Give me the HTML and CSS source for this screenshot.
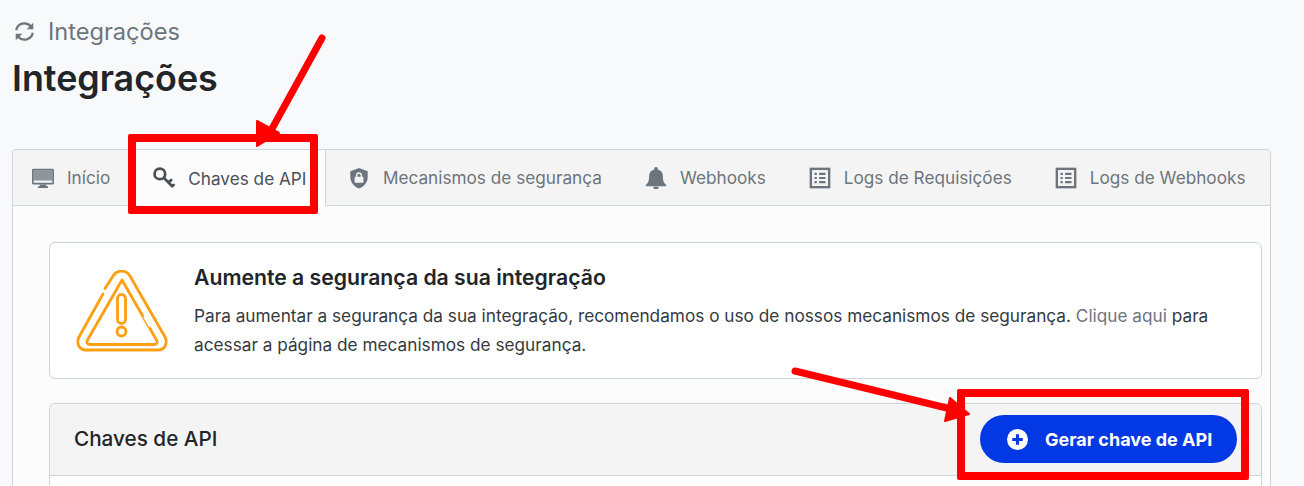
FILE: index.html
```html
<!DOCTYPE html>
<html lang="pt-BR">
<head>
<meta charset="utf-8">
<title>Integrações</title>
<link rel="stylesheet" href="styles.css">
</head>
<body>
<div class="page">
  <nav class="crumb">
    <svg class="crumb-icon" viewBox="0 0 24 24" fill="none" stroke="#6c757d" stroke-width="2.600"><path d="M2.500 10.500A9.500 9.500 0 0 1 19 6l2.200 2.400"/><path d="M22 2v7.500h-7.500z" stroke="none" fill="#6c757d"/><path d="M21.500 13.500A9.500 9.500 0 0 1 5 18l-2.200-2.400"/><path d="M2 22v-7.500h7.500z" stroke="none" fill="#6c757d"/></svg>
    <span>Integrações</span>
  </nav>
  <h1 class="title">Integrações</h1>
  <section class="tabs-card">
    <div class="tabs">
      <a class="tab tab-first">
        <svg class="tab-icon" viewBox="0 0 24 24" fill="#6c757d"><path fill-rule="evenodd" d="M1.500 2h21A1.500 1.500 0 0 1 24 3.500v14a1.500 1.500 0 0 1-1.500 1.500h-21A1.500 1.500 0 0 1 0 17.500v-14A1.500 1.500 0 0 1 1.500 2zM1.800 3.800v13.400h20.400V3.800z"/><path d="M1.800 3.800h20.400v11H1.800z" opacity=".75"/><path d="M8.500 19h7v2h2v1.800h-11V21h2z"/></svg>
        Início</a>
      <a class="tab tab-active">
        <svg class="tab-icon" viewBox="0 0 24 24" fill="none" stroke="#495057" stroke-width="3" stroke-linecap="round"><circle cx="7.500" cy="7.500" r="5.800"/><path d="M12 12l9 9M17 17l2.800-2.800M21 21l1.500-1.500"/></svg>
        Chaves de API</a>
      <a class="tab">
        <svg class="tab-icon" viewBox="0 0 24 24"><path fill="#6c757d" d="M12 1l9.500 3.500V11c0 6-4 10.500-9.500 12.500C6.500 21.500 2.500 17 2.500 11V4.500z"/><path fill="#f4f4f4" d="M8 10.500h8a.8.8 0 0 1 .8.8v5a.8.8 0 0 1-.8.8H8a.8.8 0 0 1-.8-.8v-5a.8.8 0 0 1 .8-.8z"/><path fill="none" stroke="#f4f4f4" stroke-width="1.500" d="M9.500 11V9a2.500 2.500 0 0 1 5 0v2"/></svg>
        Mecanismos de segurança</a>
      <a class="tab">
        <svg class="tab-icon" viewBox="0 0 24 24" fill="#6c757d"><path d="M12 0a2 2 0 0 1 2 2v.8c3.500.8 5.500 3.700 5.500 7.200 0 5 1 7 3.300 9.200.6.600.2 1.800-.8 1.800H2c-1 0-1.400-1.200-.8-1.800C3.500 17 4.500 15 4.500 10c0-3.500 2-6.400 5.500-7.200V2a2 2 0 0 1 2-2z"/><path d="M9 21.500h6a3 3 0 0 1-6 0z"/></svg>
        Webhooks</a>
      <a class="tab">
        <svg class="tab-icon" viewBox="0 0 24 24" fill="none" stroke="#6c757d"><rect x="2" y="2" width="20" height="20" stroke-width="2.600"/><path stroke-width="2.200" d="M6 7.500h2.500M11 7.500h7M6 12h2.500M11 12h7M6 16.500h2.500M11 16.500h7"/></svg>
        Logs de Requisições</a>
      <a class="tab">
        <svg class="tab-icon" viewBox="0 0 24 24" fill="none" stroke="#6c757d"><rect x="2" y="2" width="20" height="20" stroke-width="2.600"/><path stroke-width="2.200" d="M6 7.500h2.500M11 7.500h7M6 12h2.500M11 12h7M6 16.500h2.500M11 16.500h7"/></svg>
        Logs de Webhooks</a>
    </div>
    <div class="tabs-body">
      <div class="notice">
        <svg class="notice-icon" viewBox="0 0 92 82" fill="none" stroke="#ff9f12" stroke-width="2.800" stroke-linecap="round" stroke-linejoin="round"><path d="M29 18.500L37 6c4-6.500 13-6.500 17 0L89 67c3 6 0 13-7 13H10c-7 0-10-7-7-13L27 24"/><path d="M46 10L80.500 70c1.500 3 0 4.500-2 4.500H13.500c-2 0-3.500-1.500-2-4.500L46 10"/><rect x="41.500" y="24.500" width="8" height="29" rx="4"/><circle cx="45.500" cy="61.500" r="4.500"/><path d="M75 56.500L69 46" stroke="#fff" stroke-width="4" stroke-linecap="butt"/></svg>
        <div class="notice-text">
          <h2>Aumente a segurança da sua integração</h2>
          <p>Para aumentar a segurança da sua integração, recomendamos o uso de nossos mecanismos de segurança. <a class="link">Clique aqui</a> para acessar a página de mecanismos de segurança.</p>
        </div>
      </div>
      <div class="keys-card">
        <div class="keys-head">
          <h3>Chaves de API</h3>
          <button class="gen-btn">
            <svg class="gen-icon" viewBox="0 0 20 20"><circle cx="10" cy="10" r="10" fill="#fff"/><path d="M10 5v10M5 10h10" stroke="#0339e4" stroke-width="3"/></svg>
            Gerar chave de API</button>
        </div>
      </div>
    </div>
  </section>
  <div class="mark mark-tab"></div>
  <div class="mark mark-btn"></div>
  <svg class="arrows" viewBox="0 0 1304 486" fill="#f00" stroke="#f00" stroke-linecap="round" stroke-linejoin="round">
    <path d="M322 38L268 136" fill="none" stroke-width="7"/>
    <path d="M257 121L279 133L257 146z" stroke-width="2"/>
    <path d="M795 371L955 410" fill="none" stroke-width="7"/>
    <path d="M950 398L969 414L945 421z" stroke-width="2"/>
  </svg>
</div>
</body>
</html>
```
FILE: styles.css
```css
* { box-sizing: border-box; }
html, body { margin: 0; height: 100%; }
body {
  background: #f8f9fa;
  font-family: Inter, "Liberation Sans", sans-serif;
  color: #212529;
  overflow: hidden;
}
.page { position: relative; width: 1304px; height: 486px; overflow: hidden; padding: 18px 33px 0 12px; }
.crumb { display: flex; align-items: center; gap: 13px; height: 26px; padding-left: 2px; font-size: 23.6px; color: #6c757d; }
.crumb-icon { width: 21px; height: 21px; flex: none; }
.title { margin: 14px 0 0; font-size: 35.85px; line-height: 40px; font-weight: 600; color: #212529; }
.tabs-card { margin-top: 51px; border: 1px solid #ced4da; border-radius: 4px; background: #fcfcfc; height: 400px; }
.tabs { display: flex; height: 56px; background: #f4f4f4; border-bottom: 1px solid #ced4da; border-radius: 4px 4px 0 0; }
.tab { display: flex; align-items: center; gap: 13px; height: 55px; padding: 0 21.5px; font-size: 17.2px; color: #6c757d; white-space: nowrap; }
.tab-first { padding: 0 19px; }
.tab-active { height: 56px; background: #fcfcfc; color: #495057; border-right: 1px solid #ced4da; border-left: 1px solid #ced4da; padding: 0 19px 0 23px; }
.tab-icon { width: 22px; height: 22px; flex: none; }
.tabs-body { padding: 36px 8px 0 36px; }
.notice { display: flex; align-items: center; gap: 26px; height: 137px; padding: 0 40px 0 26px; background: #fff; border: 1px solid #ced4da; border-radius: 6px; }
.notice-icon { width: 92px; height: 82px; flex: none; }
.notice-text h2 { margin: 0 0 10px; font-size: 21.2px; line-height: 28px; font-weight: 600; color: #212529; }
.notice-text p { margin: 0; font-size: 17.23px; line-height: 29px; color: #343a40; }
.link { color: #6c757d; }
.keys-card { margin-top: 24px; border: 1px solid #ced4da; border-radius: 6px; background: #fff; height: 120px; }
.keys-head { display: flex; justify-content: space-between; align-items: center; height: 72px; padding: 0 24px 2px; background: #f4f4f4; border-bottom: 1px solid #ced4da; border-radius: 6px 6px 0 0; }
.keys-head h3 { margin: 0; font-size: 20.7px; font-weight: 500; color: #212529; }
.gen-btn { display: flex; align-items: center; gap: 17px; width: 257px; height: 48px; padding: 1px 20px 0 27px; border: 0; border-radius: 24px; background: #0339e4; color: #fff; font: 700 18px Inter, "Liberation Sans", sans-serif; white-space: nowrap; }
.gen-icon { width: 21px; height: 21px; flex: none; }
.mark { position: absolute; border: 8px solid #f00; border-radius: 2px; }
.mark-tab { left: 128px; top: 134px; width: 190px; height: 80px; }
.mark-btn { left: 957px; top: 389px; width: 292px; height: 91px; }
.arrows { position: absolute; left: 0; top: 0; width: 1304px; height: 486px; pointer-events: none; }
```
